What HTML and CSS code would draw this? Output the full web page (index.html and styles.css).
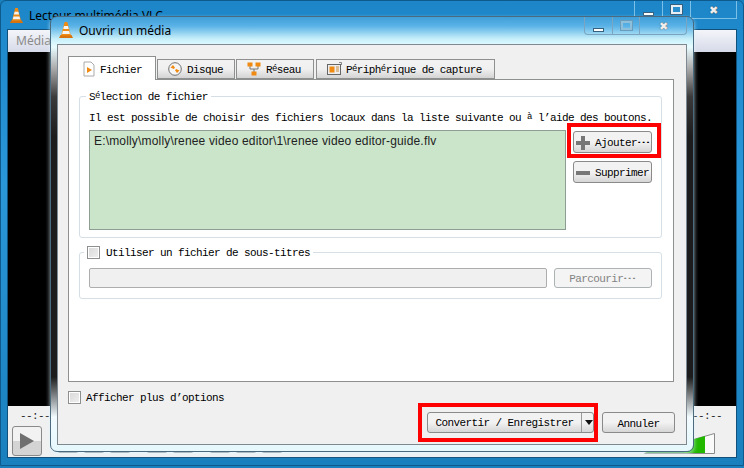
FILE: index.html
```html
<!DOCTYPE html>
<html lang="fr">
<head>
    <meta charset="UTF-8">
    <link rel="stylesheet" href="styles.css">
    <title>Ouvrir un média</title>
</head>
<body>
    <svg class="defs" width="0" height="0">
        <symbol id="cone" viewBox="0 0 16 18" preserveAspectRatio="none">
            <path d="M1 17 L2.5 14 L13.5 14 L15 17 Z" fill="#d9730d"/>
            <path d="M6.6 1 L9.4 1 L12.8 14.5 L3.2 14.5 Z" fill="#f08a12"/>
            <path d="M6 5 L10 5 L10.8 8 L5.2 8 Z" fill="#f4f4f0"/>
            <path d="M4.8 10 L11.2 10 L11.9 13 L4.1 13 Z" fill="#f4f4f0"/>
        </symbol>
    </svg>

    <!-- main VLC window behind -->
    <div class="main-window">
        <div class="main-title">
            <svg class="cone" width="15" height="17"><use href="#cone"/></svg>
            <span>Lecteur multimédia VLC</span>
            <div class="main-controls">
                <div class="ctl"><i class="min"></i></div>
                <div class="ctl"><i class="max"></i></div>
                <div class="ctl ctl-close">&#10006;</div>
            </div>
        </div>
        <div class="main-client">
            <div class="main-menu">Média</div>
            <div class="video"></div>
            <div class="seek"><span>--:--</span><span>--:--</span></div>
            <div class="player">
                <div class="play-btn"><svg width="16" height="18" viewBox="0 0 16 18"><path d="M1 1 L15 9 L1 17 Z" fill="#6f6f6f"/></svg></div>
                <div class="mini-group">
                    <div class="mini"></div>
                    <div class="mini"></div>
                    <div class="mini"></div>
                </div>
                <div class="mini-group">
                    <div class="mini"></div>
                    <div class="mini"></div>
                </div>
                <div class="mini-group">
                    <div class="mini"></div>
                    <div class="mini"></div>
                    <div class="mini"></div>
                </div>
                <svg class="volume" width="71" height="21" viewBox="0 0 71 21">
                    <path d="M0.5 20.5 L70.5 0.5 V20.5 Z" fill="#fafafa" stroke="#8a8a8a"/>
                    <path d="M1 20 L61 3 V20 Z" fill="#22b800"/>
                    <path d="M1 20 L40 9 V20 Z" fill="#1f8a1f"/>
                </svg>
            </div>
        </div>
    </div>

    <!-- dialog -->
    <div class="dialog">
        <div class="dialog-title">
            <svg class="cone" width="16" height="18"><use href="#cone"/></svg>
            <span>Ouvrir un média</span>
            <div class="dialog-controls">
                <div class="dctl dctl-min"><i class="min"></i></div>
                <div class="dctl dctl-max"><i class="max"></i></div>
                <div class="dctl dctl-close">&#10006;</div>
            </div>
        </div>
        <div class="client">
            <div class="tabs">
                <div class="tab active">
                    <svg width="14" height="16" viewBox="0 0 14 16"><path d="M2 1 H9 L12 4 V15 H2 Z" fill="#fff" stroke="#aaa"/><path d="M5 6 L10 9 L5 12 Z" fill="#f08a12"/></svg>
                    <span>Fichier</span>
                </div>
                <div class="tab tab-disque">
                    <svg width="14" height="14" viewBox="0 0 14 14"><circle cx="7" cy="7" r="6.3" fill="#f6f6f6" stroke="#6f6f6f"/><path d="M2.5 5.5 L5 3 L7 5.8 L5.8 7 Z M11.5 8.5 L9 11 L7 8.2 L8.2 7 Z" fill="#f08a12"/></svg>
                    <span>Disque</span>
                </div>
                <div class="tab tab-reseau">
                    <svg width="14" height="14" viewBox="0 0 14 14"><path d="M3 4 V7 H11 V4 M7 7 V10" fill="none" stroke="#777"/><rect x="0.5" y="0.5" width="5" height="4" fill="#f08a12"/><rect x="8.5" y="0.5" width="5" height="4" fill="#f08a12"/><rect x="4.5" y="9.5" width="5" height="4" fill="#f08a12"/></svg>
                    <span>R<em>é</em>seau</span>
                </div>
                <div class="tab tab-capture">
                    <svg width="15" height="14" viewBox="0 0 15 14"><rect x="0.5" y="2.5" width="13" height="10" fill="#eee" stroke="#666"/><rect x="2.5" y="4.5" width="5" height="6" fill="#f08a12"/><path d="M9 5 H12 M9 7 H12 M9 9 H12" stroke="#c98a3a"/><path d="M12 0.5 H14.5 V3" fill="none" stroke="#888"/></svg>
                    <span>P<em>é</em>riph<em>é</em>rique de capture</span>
                </div>
            </div>
            <div class="pane">
                <fieldset class="group group-file">
                    <legend><span class="txt">S<em>é</em>lection de fichier</span></legend>
                    <p class="hint">Il est possible de choisir des fichiers locaux dans la liste suivante ou <em>à</em> l’aide des boutons.</p>
                    <div class="file-row">
                        <div class="file-list">E:\molly\molly\renee video editor\1\renee video editor-guide.flv</div>
                        <div class="file-btns">
                            <div class="btn btn-side">
                                <svg width="14" height="14" viewBox="0 0 14 14"><path d="M5 0 H9 V5 H14 V9 H9 V14 H5 V9 H0 V5 H5 Z" fill="#777"/></svg>
                                <span>Ajouter<b>…</b></span>
                            </div>
                            <div class="btn btn-side">
                                <svg width="14" height="14" viewBox="0 0 14 14"><rect y="5" width="14" height="4" fill="#777"/></svg>
                                <span>Supprimer</span>
                            </div>
                        </div>
                    </div>
                </fieldset>
                <fieldset class="group group-subs">
                    <legend><span class="check"></span><span class="txt">Utiliser un fichier de sous-titres</span></legend>
                    <div class="subs-row">
                        <div class="subs-input"></div>
                        <div class="btn btn-disabled"><span>Parcourir<b>…</b></span></div>
                    </div>
                </fieldset>
            </div>
            <div class="options"><span class="check"></span><span class="txt">Afficher plus d’options</span></div>
            <div class="actions">
                <div class="btn btn-convert"><span class="convert-label">Convertir / Enregistrer</span><span class="convert-arrow"></span></div>
                <div class="btn btn-cancel">Annuler</div>
            </div>
        </div>
    </div>

    <!-- red annotation boxes -->
    <div class="mark mark-add"></div>
    <div class="mark mark-convert"></div>
</body>
</html>
```

FILE: styles.css
```css
html, body {
    margin: 0;
    padding: 0;
}

body {
    position: relative;
    width: 744px;
    height: 468px;
    overflow: hidden;
    background: #1a7fbd;
    font-family: "Liberation Mono", monospace;
    font-size: 11px;
    letter-spacing: -0.6px;
    color: #000;
}

.defs {
    position: absolute;
}

em {
    font-style: normal;
    font-size: 9px;
    position: relative;
    top: -2px;
}

/* the dots of the ellipsis run wide in the original font */
b {
    display: inline-block;
    font-weight: normal;
    letter-spacing: 0;
    margin-right: 7px;
    transform: translateY(-3px) scaleX(2);
    transform-origin: left;
}

.txt {
    padding-top: 2px;
}

/* main window */
.main-window {
    position: absolute;
    left: 0;
    top: 0;
    width: 744px;
    height: 466px;
    box-sizing: border-box;
    padding: 0 6px 7px 6px;
    display: flex;
    flex-direction: column;
    background: linear-gradient(#1c86c8, #2a97d8 40%, #1a7fbd);
    border: 1px solid #0f5a8c;
    border-radius: 6px 6px 0 0;
}

.main-title {
    height: 28px;
    flex: none;
    display: flex;
    align-items: center;
    gap: 5px;
    padding-left: 2px;
    font-family: "Noto Sans", sans-serif;
    font-size: 12px;
    letter-spacing: 0;
}

.main-controls {
    margin-left: auto;
    align-self: flex-start;
    height: 18px;
    display: flex;
}

.ctl {
    width: 28px;
    height: 18px;
    border-left: 1px solid #7cc0e8;
    border-bottom: 1px solid #7cc0e8;
    box-sizing: border-box;
    display: flex;
    justify-content: center;
    align-items: center;
}

.ctl-close {
    width: 47px;
    border-right: 1px solid #7cc0e8;
    color: #eee;
    font-size: 11px;
    text-shadow: 0 0 1px #333;
}

.min {
    display: block;
    width: 11px;
    height: 4px;
    margin-top: 8px;
    box-sizing: border-box;
    background: #fff;
    border: 1px solid #35607e;
}

.max {
    display: block;
    width: 11px;
    height: 9px;
    box-sizing: border-box;
    background: #2a8fcc;
    border: 2px solid #e8eef4;
    outline: 1px solid #35607e;
}

.main-client {
    flex: 1;
    display: flex;
    flex-direction: column;
    background: #f0f0f0;
    border: 1px solid #10507c;
}

.main-menu {
    height: 22px;
    line-height: 21px;
    padding-left: 8px;
    background: linear-gradient(#f4f5fa, #d6d9e8);
    font-family: "Noto Sans", sans-serif;
    font-size: 12px;
    letter-spacing: 0;
    color: #8a8a8a;
}

.video {
    flex: 1;
    background: #000;
}

.seek {
    height: 20px;
    display: flex;
    justify-content: space-between;
    align-items: center;
    padding: 0 14px 0 12px;
    color: #222;
}

.player {
    height: 31px;
    padding-left: 4px;
    display: flex;
    align-items: flex-start;
}

.play-btn {
    width: 30px;
    height: 30px;
    box-sizing: border-box;
    border: 1px solid #8a8a8a;
    border-radius: 3px;
    background: linear-gradient(#f2f2f2 50%, #d4d4d4 50%);
    display: flex;
    align-items: center;
    justify-content: center;
}

.mini-group {
    display: flex;
    gap: 4px;
    margin-left: 15px;
}

.mini {
    width: 22px;
    height: 27px;
    box-sizing: border-box;
    border: 1px solid #777;
    border-radius: 3px;
}

.volume {
    margin-left: auto;
    margin-right: 21px;
    margin-top: 7px;
}

/* dialog */
.dialog {
    position: absolute;
    left: 50px;
    top: 16px;
    width: 644px;
    height: 436px;
    box-sizing: border-box;
    padding: 0 6px 6px 6px;
    display: flex;
    flex-direction: column;
    border: 1px solid #4a6a80;
    border-radius: 7px;
    background: linear-gradient(#3f9fd9, #5ab2e6 9px, #c8f0fa 22px, #e8fcff 30px, #b0b0b0 50px, #3a3a3a 80px, #1c1c1c 120px, #1c1c1c 360px, #f2fbff 400px, #e6f8fc 100%);
    box-shadow: 0 2px 4px rgba(225, 248, 255, 0.7);
}

.dialog-title {
    height: 27px;
    flex: none;
    display: flex;
    align-items: flex-start;
    gap: 5px;
    padding: 4px 0 0 1px;
    box-sizing: border-box;
    font-family: "Noto Sans", sans-serif;
    font-size: 12px;
    letter-spacing: 0;
    color: #000;
}

.dialog-title span {
    margin-top: 1px;
}

.dialog-controls {
    margin-left: auto;
    margin-top: -4px;
    height: 18px;
    display: flex;
    border: 1px solid #7aa4c0;
    border-top: 0;
    border-radius: 0 0 4px 4px;
    box-sizing: border-box;
}

.dctl {
    height: 100%;
    display: flex;
    align-items: center;
    justify-content: center;
    box-sizing: border-box;
}

.dctl-min {
    width: 27px;
}

.dctl-max {
    width: 28px;
    border-left: 1px solid #7aa4c0;
    border-right: 1px solid #7aa4c0;
}

.dctl-max .max {
    background: transparent;
    border: 2px solid #8ec0dc;
    outline: 1px solid #6a9cbc;
}

.dctl-close {
    width: 46px;
    color: #eee;
    font-size: 11px;
    text-shadow: 0 0 1px #333;
}

.client {
    flex: 1;
    display: flex;
    flex-direction: column;
    box-sizing: border-box;
    padding: 11px 12px 0 10px;
    background: #f0f0f0;
    border: 1px solid #7d8890;
}

.tabs {
    display: flex;
    height: 23px;
    align-items: flex-end;
    flex: none;
    gap: 1px;
    position: relative;
    z-index: 1;
}

.tab {
    height: 20px;
    box-sizing: border-box;
    display: flex;
    align-items: center;
    gap: 5px;
    padding-left: 10px;
    border: 1px solid #8e8f8f;
    background: linear-gradient(#f2f2f2, #f0f0f0 50%, #d4d4d4);
}

.tab span {
    padding-top: 2px;
}

.tab.active {
    width: 88px;
    height: 24px;
    margin-bottom: -1px;
    padding-left: 13px;
    gap: 4px;
    background: #fff;
    border-bottom: 0;
}

.tab-disque {
    width: 78px;
}

.tab-reseau {
    width: 78px;
}

.tab-capture {
    width: 179px;
    margin-left: 1px;
    gap: 4px;
}

.pane {
    height: 303px;
    flex: none;
    box-sizing: border-box;
    padding: 9px 11px 0 10px;
    background: #fff;
    border: 1px solid #8e8f8f;
}

.group {
    margin: 0;
    min-width: 0;
    padding: 0 9px;
    box-sizing: border-box;
    border: 1px solid #d5dfe5;
    border-radius: 3px;
}

.group legend {
    padding: 0 3px;
    margin-left: -3px;
    height: 14px;
    line-height: 14px;
    display: flex;
    align-items: center;
}

.group-file {
    height: 149px;
}

.hint {
    margin: 8px 0 5px;
    height: 14px;
    line-height: 14px;
    white-space: nowrap;
}

.file-row {
    display: flex;
    justify-content: space-between;
}

.file-list {
    width: 477px;
    height: 100px;
    box-sizing: border-box;
    padding: 3px 4px;
    background: #cbe5cb;
    border: 1px solid #8e9e92;
    font-family: "Liberation Sans", sans-serif;
    font-size: 12px;
    letter-spacing: 0.17px;
    color: #222;
}

.file-btns {
    display: flex;
    flex-direction: column;
    gap: 8px;
    margin-top: 1px;
}

.btn {
    height: 22px;
    box-sizing: border-box;
    display: flex;
    align-items: center;
    justify-content: center;
    padding-top: 2px;
    border: 1px solid #8a8a8a;
    border-radius: 3px;
    background: linear-gradient(#f2f2f2 50%, #d6d6d6);
}

.btn-side {
    width: 79px;
    gap: 5px;
    padding-left: 2px;
    justify-content: flex-start;
}

.btn-side svg {
    flex: none;
}

.group-subs {
    margin-top: 7px;
    height: 54px;
}

.group-subs legend {
    margin-left: -5px;
}

.group-subs .check {
    margin-right: 6px;
}

.check {
    display: inline-block;
    width: 13px;
    height: 13px;
    margin-right: 5px;
    box-sizing: border-box;
    border: 1px solid #8e8f8f;
    outline: 1px solid #fff;
    outline-offset: -2px;
    background: linear-gradient(135deg, #d8d8d8, #f0f0f0);
    flex: none;
}

.subs-row {
    display: flex;
    justify-content: space-between;
    margin-top: 9px;
}

.subs-input {
    width: 458px;
    height: 20px;
    box-sizing: border-box;
    background: #f0f0f0;
    border: 1px solid #adadad;
    border-radius: 2px;
}

.btn-disabled {
    width: 98px;
    height: 20px;
    background: #f4f4f4;
    border-color: #adb2b5;
    color: #838383;
}

.options {
    display: flex;
    align-items: center;
    height: 14px;
    margin-top: 8px;
}

.actions {
    display: flex;
    justify-content: flex-end;
    gap: 8px;
    margin-top: 8px;
    margin-right: -1px;
}

.btn-convert {
    width: 167px;
    height: 21px;
    padding-top: 0;
    justify-content: flex-start;
}

.convert-label {
    width: 153px;
    text-align: center;
    border-right: 1px solid #9a9a9a;
    height: 19px;
    line-height: 21px;
}

.convert-arrow {
    margin-left: 3px;
    width: 0;
    height: 0;
    border-left: 4px solid transparent;
    border-right: 4px solid transparent;
    border-top: 5px solid #111;
}

.btn-cancel {
    width: 73px;
    height: 21px;
}

/* annotation */
.mark {
    position: absolute;
    box-sizing: border-box;
    border: 4px solid #ff0000;
}

.mark-add {
    left: 567px;
    top: 123px;
    width: 94px;
    height: 35px;
}

.mark-convert {
    left: 418px;
    top: 403px;
    width: 180px;
    height: 39px;
}
```
